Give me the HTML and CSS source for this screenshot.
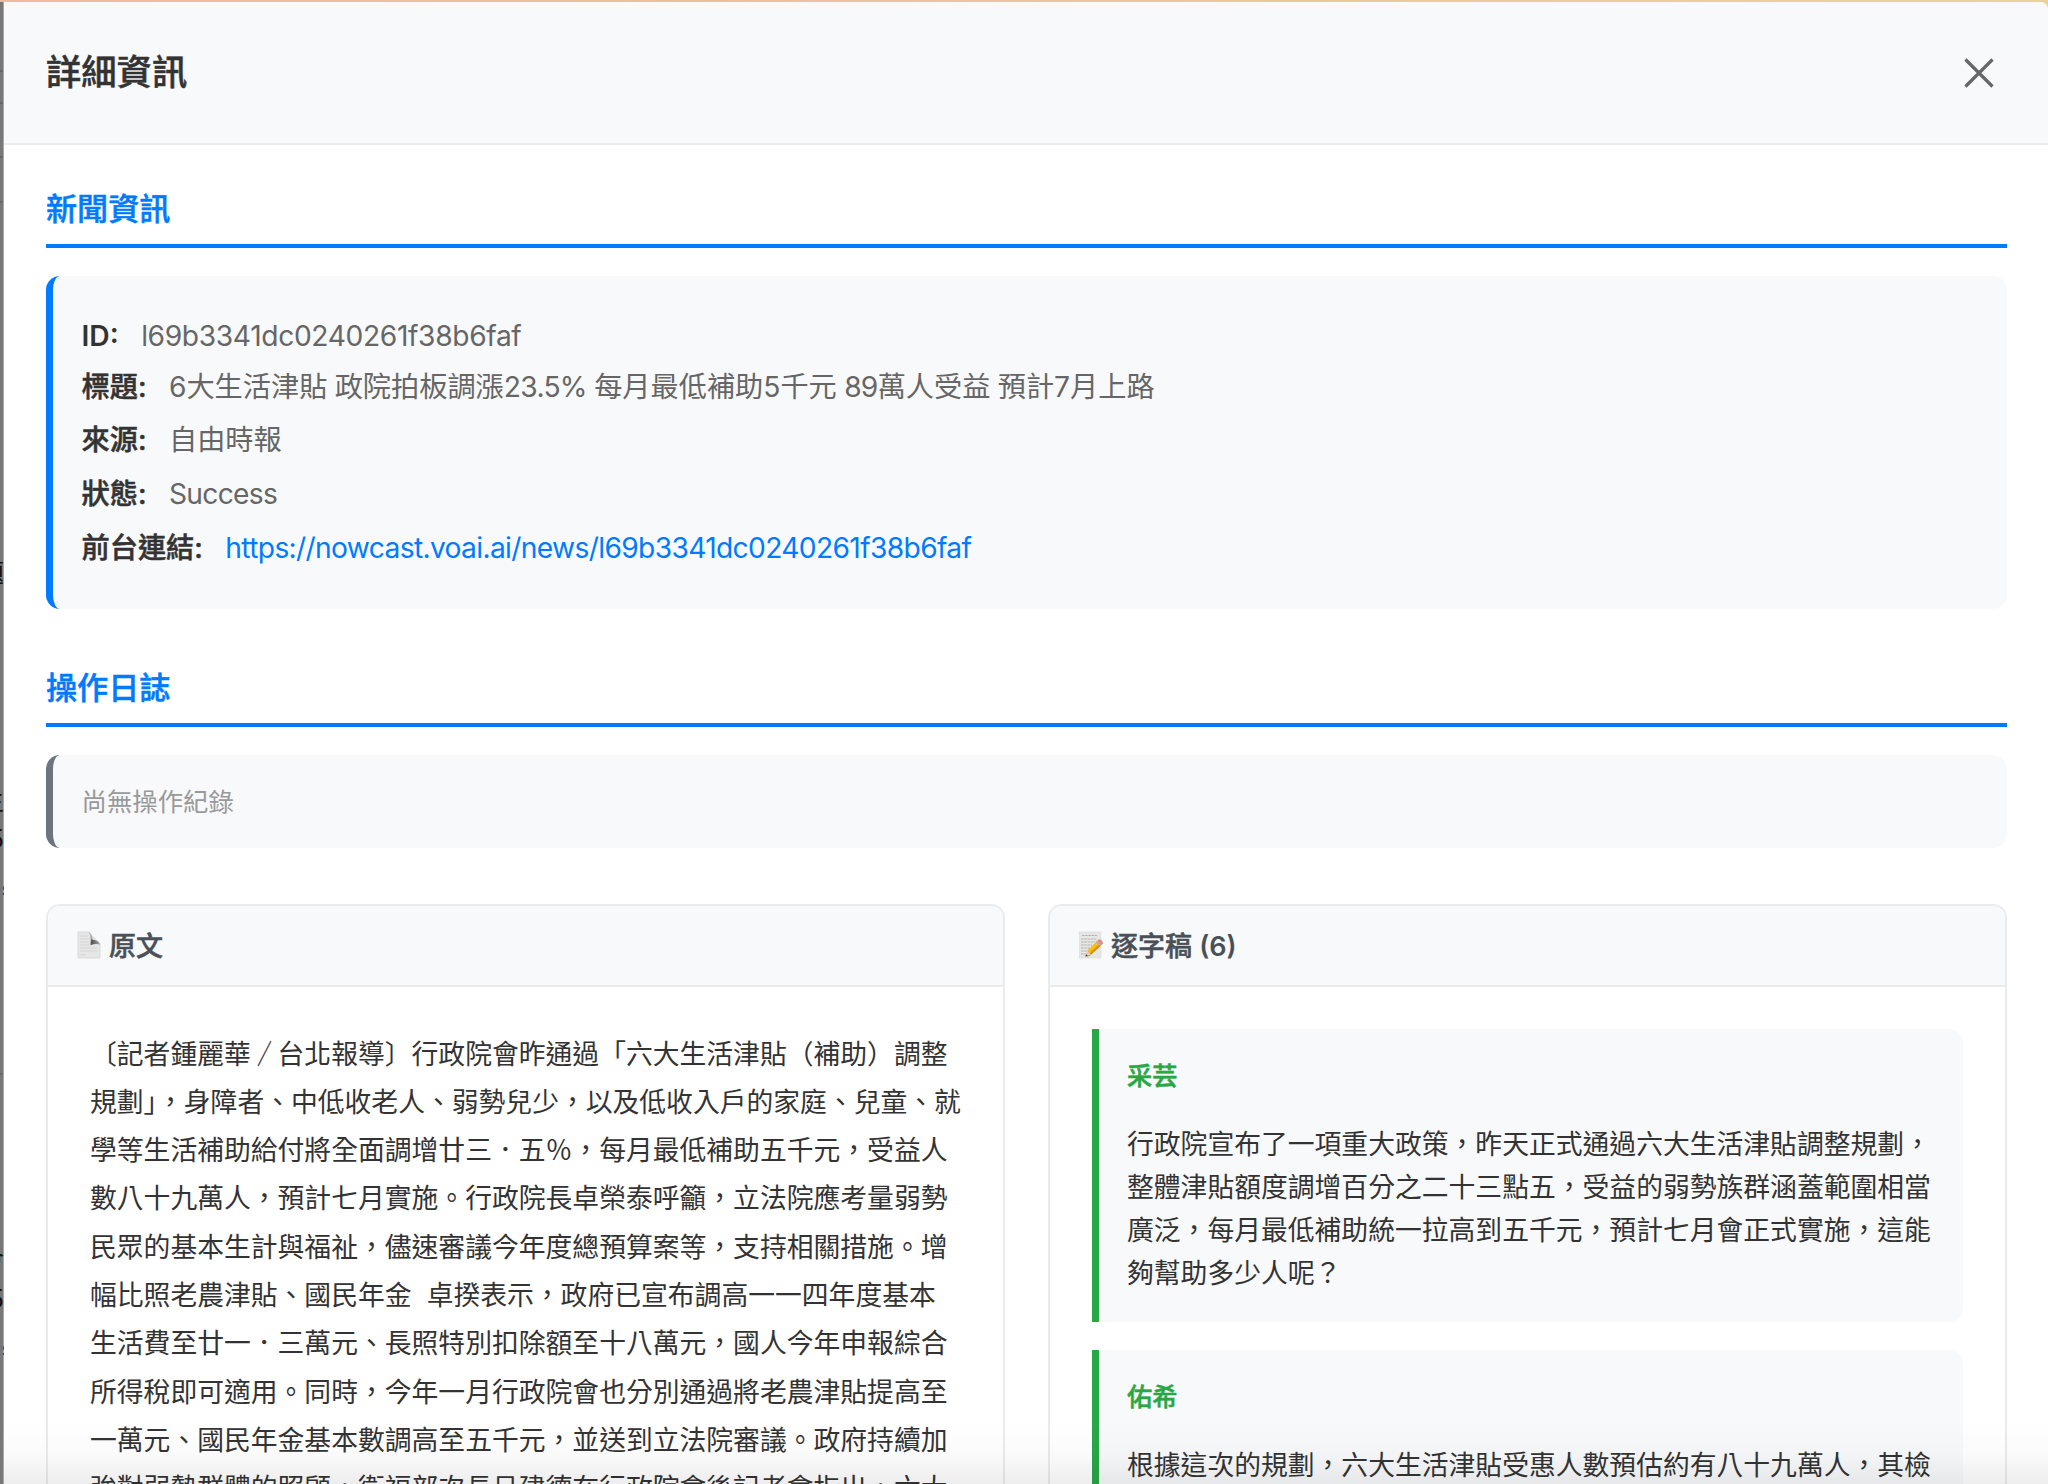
FILE: index.html
```
<!DOCTYPE html>
<html lang="zh-Hant">
<head>
<meta charset="utf-8">
<title>詳細資訊</title>
<link rel="stylesheet" href="styles.css">
</head>
<body>
<div class="backdrop" aria-hidden="true">
  <i class="rule r1"></i><i class="rule r2"></i><i class="rule r3"></i><i class="rule r4"></i><i class="rule r5"></i>
  <span class="behind b1">題</span>
  <span class="behind b2">生</span>
  <span class="behind b3">5</span>
  <span class="behind b4 blue">s</span>
  <span class="behind b5">會</span>
  <span class="behind b6">5</span>
  <span class="behind b7 blue">s</span>
</div>
<main class="modal">
  <header class="modal-header">
    <h1 class="modal-title">詳細資訊</h1>
    <button class="close" aria-label="關閉">
      <svg width="32" height="32" viewBox="0 0 32 32"><path d="M2.500 2.500 29.500 29.500M29.500 2.500 2.500 29.500" fill="none" stroke="#666" stroke-width="3.2"/></svg>
    </button>
  </header>
  <div class="modal-body">
    <section class="section">
      <h2 class="section-title">新聞資訊</h2>
      <div class="info-card">
        <div class="row row-id"><strong class="label latin">ID:</strong><span class="value id">l69b3341dc0240261f38b6faf</span></div>
        <div class="row"><strong class="label">標題:</strong><span class="value headline">6大生活津貼 政院拍板調漲<span class="num">23.5%</span> 每月最低補助5千元 <span class="num">89</span>萬人受益 預計7月上路</span></div>
        <div class="row"><strong class="label">來源:</strong><span class="value">自由時報</span></div>
        <div class="row"><strong class="label">狀態:</strong><span class="value status">Success</span></div>
        <div class="row"><strong class="label">前台連結:</strong><a class="value link">https://nowcast.voai.ai/news/l69b3341dc0240261f38b6faf</a></div>
      </div>
    </section>
    <section class="section">
      <h2 class="section-title">操作日誌</h2>
      <div class="log-card">尚無操作紀錄</div>
    </section>
    <div class="columns">
      <section class="panel">
        <h3 class="panel-head">
          <svg class="icon" width="24" height="28" viewBox="0 0 24 28">
            <defs>
              <linearGradient id="fold" x1="0" y1="0" x2="0" y2="1"><stop offset="0" stop-color="#ccc"/><stop offset=".6" stop-color="#999"/><stop offset="1" stop-color="#555"/></linearGradient>
              <linearGradient id="curl" x1="0" y1="0" x2="1" y2="0"><stop offset="0" stop-color="#4a4a4a"/><stop offset=".5" stop-color="#777"/><stop offset="1" stop-color="#aaa"/></linearGradient>
            </defs>
            <path d="M1 1H11.500L23 13V27H1Z" fill="#e6e6e6" stroke="#d4d4d4" stroke-width=".8"/>
            <path d="M10.500 .6C13.500 1 15.500 4 15.500 9L13.500 13C14 7 13.500 3 10.500 .6Z" fill="url(#fold)"/>
            <path d="M14.500 8.500C19 8.800 22.500 10.500 23.200 13.800C20.500 12.600 17 12.800 13.500 14.200Z" fill="url(#curl)"/>
            <path d="M3 5h8M3 8h9M3 11h9M3 14h10M3 17h17M3 20h17M3 24h6" stroke="#d0d0d0" stroke-width=".8"/>
          </svg>
          <span>原文</span>
        </h3>
        <div class="article">
          <div>〔記者鍾麗華<span class="slash">／</span>台北報導〕行政院會昨通過「六大生活津貼（補助）調整</div>
          <div>規劃」，身障者、中低收老人、弱勢兒少，以及低收入戶的家庭、兒童、就</div>
          <div>學等生活補助給付將全面調增廿三．五％，每月最低補助五千元，受益人</div>
          <div>數八十九萬人，預計七月實施。行政院長卓榮泰呼籲，立法院應考量弱勢</div>
          <div>民眾的基本生計與福祉，儘速審議今年度總預算案等，支持相關措施。增</div>
          <div>幅比照老農津貼、國民年金&nbsp; 卓揆表示，政府已宣布調高一一四年度基本</div>
          <div>生活費至廿一．三萬元、長照特別扣除額至十八萬元，國人今年申報綜合</div>
          <div>所得稅即可適用。同時，今年一月行政院會也分別通過將老農津貼提高至</div>
          <div>一萬元、國民年金基本數調高至五千元，並送到立法院審議。政府持續加</div>
          <div>強對弱勢群體的照顧，衛福部次長呂建德在行政院會後記者會指出，六大</div>
        </div>
      </section>
      <section class="panel">
        <h3 class="panel-head">
          <svg class="icon" width="24" height="28" viewBox="0 0 24 28">
            <path d="M0 1H22V27H0Z" fill="#e6e6e5" stroke="#d8d8d8" stroke-width=".6"/>
            <path d="M3 4.500h15M2 8h16M2 11h14M2 14h11M2 17h9M2 20h6M2 23h5" stroke="#aaa" stroke-width=".9" stroke-dasharray="2.500 .7"/>
            <path d="M7 25 10 24 21 14" fill="none" stroke="#999" stroke-width="2"/>
            <path d="M8 20 18 10 22 14.500 12 23.500Z" fill="#f6bc1c"/>
            <path d="M10.500 22.200 20.800 13 22 14.500 12 23.500Z" fill="#d98f0a"/>
            <path d="M8 20 12 23.500 6.500 25.500Z" fill="#ecd0a0"/><path d="M7.200 23.300 8.600 24.700 6.300 25.600Z" fill="#333"/>
            <path d="M17 11 19 9 23 13.300 21 15.300Z" fill="#a9b4bd"/><path d="M18.500 9.500 20 8.300Q24 9 24 12.500L22.500 14Z" fill="#ee8584"/>
          </svg>
          <span>逐字稿 <span class="latin">(6)</span></span>
        </h3>
        <div class="transcript">
          <article class="item">
            <div class="speaker">采芸</div>
            <div class="speech">
              <div>行政院宣布了一項重大政策，昨天正式通過六大生活津貼調整規劃，</div>
              <div>整體津貼額度調增百分之二十三點五，受益的弱勢族群涵蓋範圍相當</div>
              <div>廣泛，每月最低補助統一拉高到五千元，預計七月會正式實施，這能</div>
              <div>夠幫助多少人呢？</div>
            </div>
          </article>
          <article class="item">
            <div class="speaker">佑希</div>
            <div class="speech">
              <div>根據這次的規劃，六大生活津貼受惠人數預估約有八十九萬人，其檢</div>
            </div>
          </article>
        </div>
      </section>
    </div>
  </div>
  <div class="fade"></div>
</main>
</body>
</html>
```
FILE: styles.css
```
* { box-sizing: border-box; }
html, body { margin: 0; height: 100%; overflow: hidden; }
body {
  padding: 2px 0 0 4px;
  position: relative;
  background: linear-gradient(90deg, #f0b8a0, #ecc49c 50%, #e8d596);
  font-family: Inter, "Noto Sans CJK TC", sans-serif;
  color: #333;
}
h1, h2, h3 { margin: 0; }

.backdrop {
  position: absolute; left: 0; top: 2px; bottom: 0; width: 4px;
  overflow: hidden;
  background: linear-gradient(90deg, #787878 3px, #a8a8a8 3px);
}
.rule { position: absolute; left: 0; width: 3px; height: 2px; background: #696969; }
.r1 { top: 68px; } .r2 { top: 100px; } .r3 { top: 154px; } .r4 { top: 199px; } .r5 { top: 1071px; }
.behind { position: absolute; right: 0; font-size: 25px; line-height: 26px; color: #111; }
.behind.blue { color: #0a4a9c; right: -8px; font-size: 20px; }
.b1 { top: 558px; } .b2 { top: 786px; } .b3 { top: 824px; } .b4 { top: 874px; }
.b5 { top: 1246px; } .b6 { top: 1284px; } .b7 { top: 1334px; }

.modal {
  position: relative;
  height: 100%;
  display: flex;
  flex-direction: column;
  background: #fff;
  border-top-right-radius: 8px;
  overflow: hidden;
}
.modal-header {
  flex: none;
  height: 143px;
  padding: 0 53px 0 42px;
  display: flex;
  align-items: center;
  justify-content: space-between;
  background: #f8f9fb;
  border-bottom: 2px solid #e9ecef;
}
.modal-title { font-size: 35.3px; font-weight: 500; line-height: 49px; }
.modal-title, .section-title, .label, .panel-head, .speaker { -webkit-text-stroke: .5px currentColor; }
.latin { -webkit-text-stroke: 0; }
.close { display: flex; padding: 0; border: 0; background: none; }

.modal-body { flex: 1; min-height: 0; padding: 42px 41px 0 42px; overflow: hidden; }
.section { margin-bottom: 57px; }
.section-title {
  margin-bottom: 28px;
  padding-bottom: 12px;
  border-bottom: 4px solid #007bff;
  color: #007bff;
  font-size: 31.1px;
  font-weight: 500;
  line-height: 45px;
}
.info-card, .log-card {
  background: #f8f9fb;
  border-left: 7px solid #007bff;
  border-radius: 14px;
}
.info-card { height: 333px; padding: 36px 28.5px; font-size: 28.2px; }
.row { display: flex; line-height: 53.9px; white-space: nowrap; }
.row-id { line-height: 48.5px; }
.label { font-weight: 500; margin-right: 22.5px; }
.latin, .label.latin { font-weight: 600; -webkit-text-stroke: 0; }
.value { color: #666; }
.id { letter-spacing: -.36px; }
.headline { word-spacing: -.6px; }
.num { letter-spacing: -.7px; }
.status { letter-spacing: -.7px; }
.link { color: #007bff; letter-spacing: -.65px; }
.log-card {
  height: 93px;
  padding: 0 28.5px;
  border-left-color: #6c757d;
  color: #999;
  font-size: 25.4px;
  line-height: 93px;
}

.columns { display: grid; grid-template-columns: 1fr 1fr; gap: 43px; margin-top: -1px; }
.panel {
  height: 700px;
  border: 2px solid #e9ecef;
  border-radius: 14px;
  overflow: hidden;
}
.panel-head {
  display: flex;
  align-items: center;
  gap: 8px;
  height: 81px;
  padding: 0 29px 2px;
  background: #f8f9fb;
  border-bottom: 2px solid #e9ecef;
  color: #495057;
  font-size: 27px;
  font-weight: 500;
}
.article {
  padding: 42.5px 0 0 42px;
  font-size: 26.81px;
  line-height: 48.3px;
  white-space: nowrap;
}
.slash { display: inline-block; transform: scaleX(.52); -webkit-text-stroke: .6px #333; }
.transcript { display: flex; flex-direction: column; gap: 28px; padding: 42px; }
.item {
  padding: 27px 28px;
  border-left: 7px solid #28a745;
  border-radius: 0 14px 14px 0;
  background: #f8f9fb;
}
.speaker { margin-bottom: 27px; color: #28a745; font-size: 25.2px; font-weight: 500; line-height: 40px; }
.speech { font-size: 26.81px; line-height: 42.9px; white-space: nowrap; }
.fade {
  position: absolute; left: 0; right: 0; bottom: 0; height: 64px;
  background: linear-gradient(rgba(0,0,0,0), rgba(0,0,0,.02) 55%, rgba(0,0,0,.07));
}
```
